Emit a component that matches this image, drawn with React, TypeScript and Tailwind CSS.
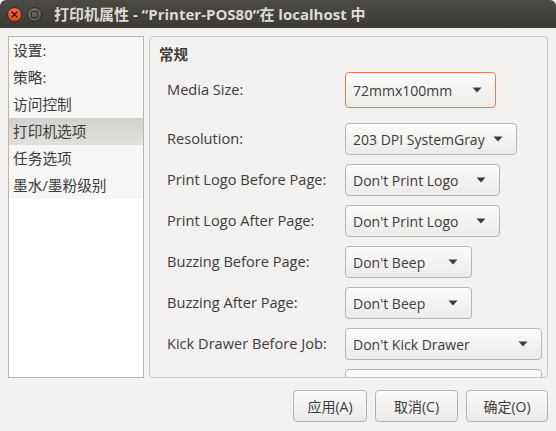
import React from "react";

const FONT = '"Open Sans", "Noto Sans CJK SC", sans-serif';

function Arrow() {
  return (
    <svg width="10" height="6" viewBox="0 0 10 6" className="shrink-0">
      <path d="M0.5 0.5 L9.5 0.5 L5 5.5 Z" fill="#3c3c3c" />
    </svg>
  );
}

function Combo({ text, w, h = 32, focus = false }: { text: string; w: number; h?: number; focus?: boolean }) {
  return (
    <div
      className={`flex items-center justify-between pl-[7px] pr-[13px] rounded-[4px] border bg-gradient-to-b from-[#fbfbfa] to-[#ecebea] shadow-[inset_0_1px_0_#ffffff] ${
        focus ? "border-[#e77b55]" : "border-[#b9b5b0]"
      }`}
      style={{ width: w, height: h }}
    >
      <span className="text-[#3c3c3c] whitespace-nowrap text-[14px]">{text}</span>
      <Arrow />
    </div>
  );
}

function Row({ label, children, mt }: { label: string; children: React.ReactNode; mt: string }) {
  return (
    <div className={`flex items-center ${mt}`}>
      <div className="w-[178px] text-[#3c3c3c] whitespace-nowrap text-[14.6px] leading-[18px] -mt-[2px]">{label}</div>
      {children}
    </div>
  );
}

function Btn({ label, w }: { label: string; w: number }) {
  return (
    <div
      className="h-[32px] flex items-center justify-center rounded-[4px] border border-[#b4b0ab] bg-gradient-to-b from-[#fafaf9] to-[#ebeae9] text-[#3c3c3c] shadow-[inset_0_1px_0_#ffffff]"
      style={{ width: w }}
    >
      {label}
    </div>
  );
}

export default function App() {
  const items = ["设置:", "策略:", "访问控制", "打印机选项", "任务选项", "墨水/墨粉级别"];
  return (
    <div
      className="w-[556px] h-[431px] bg-[#f2f1f0] flex flex-col overflow-hidden text-[14px]"
      style={{ fontFamily: FONT }}
    >
      {/* Title bar */}
      <div className="h-[28px] shrink-0 flex items-center rounded-t-[6px] bg-gradient-to-b from-[#4b4a45] to-[#3b3a36]">
        <div className="ml-[7px] w-[15px] h-[15px] rounded-full bg-gradient-to-b from-[#f26a3c] to-[#df4a19] border border-[#3a2a22] flex items-center justify-center">
          <svg width="7" height="7" viewBox="0 0 7 7">
            <path d="M1 1 L6 6 M6 1 L1 6" stroke="#3a1a10" strokeWidth="1.4" strokeLinecap="round" />
          </svg>
        </div>
        <div className="ml-[5px] w-[15px] h-[15px] rounded-full bg-gradient-to-b from-[#6c6b66] to-[#55544f] border border-[#2e2d2a] flex items-center justify-center">
          <div className="w-[7px] h-[7px] border-[1.5px] border-[#2e2d2a] rounded-[1px]" />
        </div>
        <div className="ml-[12px] text-[#dfdbd2] font-bold text-[15px] whitespace-nowrap">
          打印机属性 - “Printer-POS80“在 localhost 中
        </div>
      </div>

      {/* Body */}
      <div className="flex gap-[5px] px-[8px] pt-[8px] h-[350px] shrink-0">
        <div className="w-[136px] h-[342px] border border-[#b9b4ae] bg-white flex flex-col">
          {items.map((t) => (
            <div
              key={t}
              className={`h-[27px] flex items-center pl-[4px] text-[14.7px] text-[#3c3c3c] ${
                t === "打印机选项" ? "bg-gradient-to-b from-[#d3d1ce] to-[#e2e0dd]" : "bg-[#f6f6f5]"
              }`}
            >
              {t}
            </div>
          ))}
        </div>
        <div className="w-[399px] h-[342px] border border-[#cbc7c3] rounded-[4px] flex flex-col overflow-hidden">
          <div className="pl-[9px] pt-[9px] font-bold text-[#3c3c3c] text-[14.5px] leading-[18px]">常规</div>
          <div className="pl-[17px] flex flex-col">
            <Row label="Media Size:" mt="mt-[8px]">
              <Combo text="72mmx100mm" w={151} h={36} focus />
            </Row>
            <Row label="Resolution:" mt="mt-[15px]">
              <Combo text="203 DPI SystemGray" w={172} />
            </Row>
            <Row label="Print Logo Before Page:" mt="mt-[9px]">
              <Combo text="Don't Print Logo" w={155} />
            </Row>
            <Row label="Print Logo After Page:" mt="mt-[9px]">
              <Combo text="Don't Print Logo" w={155} />
            </Row>
            <Row label="Buzzing Before Page:" mt="mt-[9px]">
              <Combo text="Don't Beep" w={127} />
            </Row>
            <Row label="Buzzing After Page:" mt="mt-[9px]">
              <Combo text="Don't Beep" w={127} />
            </Row>
            <Row label="Kick Drawer Before Job:" mt="mt-[9px]">
              <Combo text="Don't Kick Drawer" w={197} />
            </Row>
            <Row label="" mt="mt-[9px]">
              <Combo text="" w={197} />
            </Row>
          </div>
        </div>
      </div>

      {/* Buttons */}
      <div className="flex justify-end gap-[8px] pr-[8px] mt-[12px]">
        <Btn label="应用(A)" w={74} />
        <Btn label="取消(C)" w={83} />
        <Btn label="确定(O)" w={82} />
      </div>
    </div>
  );
}
